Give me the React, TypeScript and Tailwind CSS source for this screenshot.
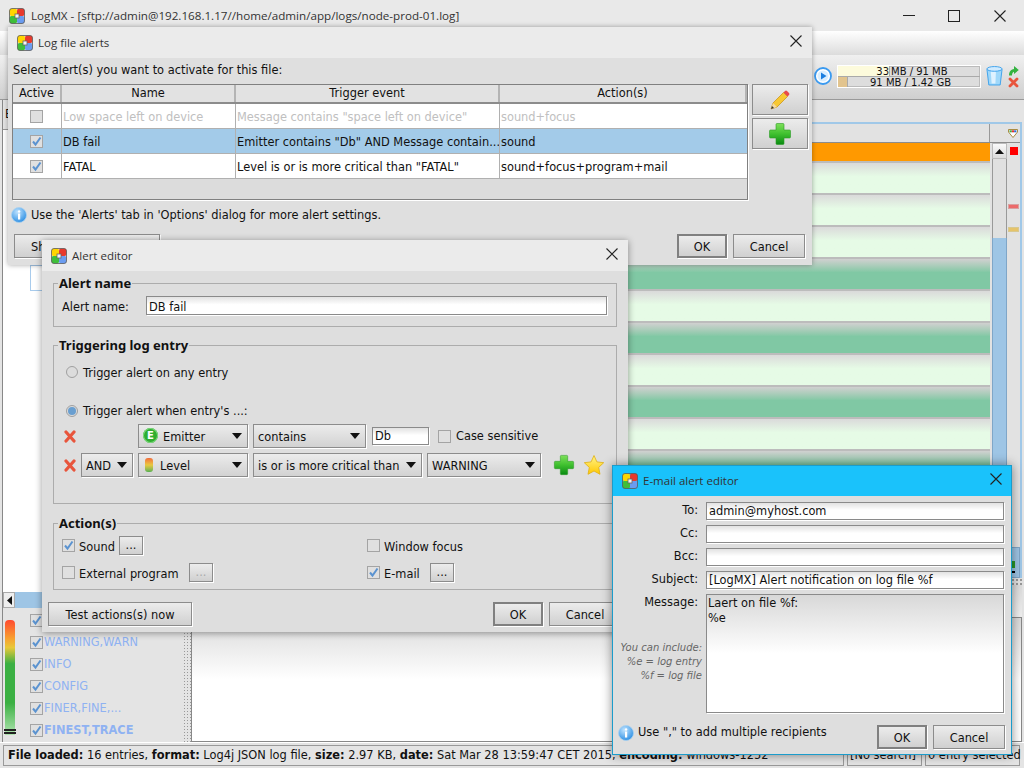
import React from "react"

const Logo = () => (
  <svg width="16" height="16" viewBox="0 0 16 16" className="shrink-0">
    <rect x="0.5" y="0.5" width="7.5" height="7.5" rx="2" fill="#ffd500" />
    <rect x="8" y="0.5" width="7.5" height="7.5" rx="2" fill="#e8392c" />
    <rect x="0.5" y="8" width="7.5" height="7.5" rx="2" fill="#3fbf3a" />
    <rect x="8" y="8" width="7.5" height="7.5" rx="2" fill="#6b9cf0" />
    <rect x="0.5" y="0.5" width="15" height="15" rx="2.5" fill="none" stroke="#5a5a5a" strokeWidth="0.8" />
    <rect x="6" y="6" width="4" height="4" fill="#f4f4f4" stroke="#666" strokeWidth="0.8" />
  </svg>
)

const CloseX = ({ size = 12 }: { size?: number }) => (
  <svg width={size} height={size} viewBox="0 0 12 12" className="shrink-0">
    <path d="M0.5 0.5L11.5 11.5M11.5 0.5L0.5 11.5" stroke="#222" strokeWidth="1.1" fill="none" />
  </svg>
)

const RedX = () => (
  <svg width="12" height="13" viewBox="0 0 12 13" className="shrink-0">
    <path d="M2 2L10 11M10 2L2 11" stroke="#e8553c" strokeWidth="3.2" strokeLinecap="round" fill="none" />
  </svg>
)

const Plus = ({ size = 24 }: { size?: number }) => (
  <svg width={size} height={size} viewBox="0 0 24 24" className="shrink-0">
    <defs>
      <linearGradient id="plusg" x1="0" y1="0" x2="0" y2="1">
        <stop offset="0" stopColor="#7ee05a" />
        <stop offset="0.5" stopColor="#3fc02f" />
        <stop offset="1" stopColor="#0a8a12" />
      </linearGradient>
    </defs>
    <path d="M9 1.5h6a1 1 0 0 1 1 1V8h5.500a1 1 0 0 1 1 1v6a1 1 0 0 1-1 1H16v5.500a1 1 0 0 1-1 1H9a1 1 0 0 1-1-1V16H2.500a1 1 0 0 1-1-1V9a1 1 0 0 1 1-1H8V2.500a1 1 0 0 1 1-1z" fill="url(#plusg)" stroke="#2c9a26" strokeWidth="0.6" />
  </svg>
)

const Star = () => (
  <svg width="22" height="22" viewBox="0 0 22 22" className="shrink-0">
    <defs>
      <linearGradient id="starg" x1="0" y1="0" x2="0" y2="1">
        <stop offset="0" stopColor="#fff48a" />
        <stop offset="1" stopColor="#ffc800" />
      </linearGradient>
    </defs>
    <path d="M11 1.500l2.900 6.400 6.800.8-5 4.700 1.300 6.900L11 17l-6 3.300 1.300-6.900-5-4.700 6.800-.8z" fill="url(#starg)" stroke="#e0b010" strokeWidth="0.8" strokeLinejoin="round" />
  </svg>
)

const Pencil = () => (
  <svg width="20" height="20" viewBox="0 0 20 20">
    <path d="M1 19l2-6L13.500 2.500l4 4L7 17z" fill="#f7c832" stroke="#c98f10" strokeWidth="0.7" />
    <path d="M1 19l2-6 4 4z" fill="#f4d9a0" />
    <path d="M1 19l1-3 2 2z" fill="#333" />
    <path d="M13.500 2.500l1.500-1.500a1.500 1.500 0 0 1 2 0l2 2a1.500 1.500 0 0 1 0 2l-1.500 1.500z" fill="#e84a4a" />
  </svg>
)

const Info = () => (
  <svg width="16" height="16" viewBox="0 0 16 16" className="shrink-0">
    <defs>
      <radialGradient id="infog" cx="0.4" cy="0.3" r="0.8">
        <stop offset="0" stopColor="#bfe3ff" />
        <stop offset="1" stopColor="#1d86e0" />
      </radialGradient>
    </defs>
    <circle cx="8" cy="8" r="7.5" fill="url(#infog)" stroke="#a8d0f0" strokeWidth="0.8" />
    <rect x="7" y="6.500" width="2.200" height="6" fill="#fff" />
    <circle cx="8.100" cy="4.500" r="1.200" fill="#fff" />
  </svg>
)

const Check = ({ checked, faded }: { checked?: boolean; faded?: boolean }) => (
  <span className={`flex h-[13px] w-[13px] shrink-0 items-center justify-center border border-[#a4a4a4] ${faded ? "bg-[#e4e4e4]" : "bg-[#e0e0e0]"}`}>
    {checked && (
      <svg width="11" height="11" viewBox="0 0 11 11">
        <path d="M2 5.500L4.500 8.500L9.500 1.500" stroke="#5b93d0" strokeWidth="2" fill="none" />
      </svg>
    )}
  </span>
)

const Radio = ({ on }: { on?: boolean }) => (
  <span className="flex h-[12px] w-[12px] shrink-0 items-center justify-center rounded-full border border-[#a0a0a0] bg-[#dcdcdc]">
    {on && <span className="h-[8px] w-[8px] rounded-full bg-[#6a9fd0]" />}
  </span>
)

function Btn({ children, w, main, faded, h = "h-[24px]" }: { children: React.ReactNode; w: string; main?: boolean; faded?: boolean; h?: string }) {
  return (
    <div className={`flex ${h} ${w} shrink-0 items-center justify-center bg-gradient-to-b from-[#ececec] to-[#d0d0d0] shadow-[1px_1px_0_#fff] ${main ? "border-2 border-[#808080]" : "border border-[#8c8c8c]"} ${faded ? "text-[#aaa]" : "text-[#111]"}`}>
      {children}
    </div>
  )
}

const inputCls = "flex items-center border border-[#8a8a8a] bg-gradient-to-b from-[#e2e2e2] to-white to-[45%] pl-[2px] pt-[2px] whitespace-nowrap shadow-[1px_1px_0_#fff]"

function Select({ w, icon, label, h = "h-[24px]" }: { w: string; icon?: React.ReactNode; label: string; h?: string }) {
  return (
    <div className={`flex ${h} ${w} shrink-0 items-center justify-between border border-[#8c8c8c] bg-gradient-to-b from-[#ececec] to-[#d2d2d2] pl-[4px] pr-[5px] shadow-[1px_1px_0_#fff]`}>
      <span className="flex items-center gap-[5px] whitespace-nowrap">
        {icon}
        <span className="pt-[4px]">{label}</span>
      </span>
      <svg width="10" height="6" viewBox="0 0 10 6" className="shrink-0">
        <path d="M0 0H10L5 6z" fill="#111" />
      </svg>
    </div>
  )
}

function TitleBar({ title, h = "h-[31px]", bg = "bg-[#ebebeb]", closeCls }: { title: string; h?: string; bg?: string; closeCls: string }) {
  return (
    <div className={`flex ${h} shrink-0 items-center pl-[9px] ${bg} font-['Open_Sans','Noto_Sans',sans-serif] text-[11.5px] text-[#333]`}>
      <Logo />
      <span className="ml-[5px] flex-1">{title}</span>
      <span className={closeCls}>
        <CloseX />
      </span>
    </div>
  )
}

function Legend({ children }: { children: React.ReactNode }) {
  return <legend className="-ml-[4px] px-[1px] font-['Noto_Sans',sans-serif] text-[13px] leading-[16px] font-bold text-[#111]">{children}</legend>
}

const alertRows = [
  { name: "Low space left on device", trig: 'Message contains "space left on device"', act: "sound+focus", faded: true, checked: false },
  { name: "DB fail", trig: 'Emitter contains "Db" AND Message contain...', act: "sound", sel: true, checked: true },
  { name: "FATAL", trig: 'Level is or is more critical than "FATAL"', act: "sound+focus+program+mail", checked: true },
]

const tableCols = "grid grid-cols-[49px_174px_264px_247px]"

function AlertsDialog() {
  return (
    <div className="absolute left-[8px] top-[27px] flex h-[238px] w-[804px] flex-col bg-[#dfdfdf] shadow-[0_0_5px_rgba(0,0,0,0.35)]">
      <TitleBar title="Log file alerts" closeCls="mr-[10px] mb-[3px]" />
      <div className="flex flex-1 flex-col px-[4px]">
        <div className="flex h-[26px] shrink-0 items-center pl-[1px]">Select alert(s) you want to activate for this file:</div>
        <div className="flex gap-[4px]">
          <div className="h-[116px] w-[736px] border border-[#808080] bg-[#dcdcdc] shadow-[1px_1px_0_#fff]">
            <div className={`${tableCols} h-[19px] border-b-2 border-[#8c8c8c]`}>
              {["Active", "Name", "Trigger event", "Action(s)"].map((c) => (
                <div key={c} className="flex items-center justify-center border-r-2 border-[#b4b4b4] bg-[#e2e2e2] leading-none">
                  {c}
                </div>
              ))}
            </div>
            {alertRows.map((r) => (
              <div key={r.name} className={`${tableCols} h-[25px] border-b border-[#b0b0b0] ${r.sel ? "bg-[#a3cbe9]" : "bg-white"} ${r.faded ? "text-[#c0c0c0]" : "text-[#111]"}`}>
                <div className="flex items-center justify-center border-r border-[#b0b0b0] pr-[2px]">
                  <Check checked={r.checked} />
                </div>
                <div className="flex items-center border-r border-[#b0b0b0] pl-[1px] pt-[4px] whitespace-nowrap">{r.name}</div>
                <div className="flex items-center overflow-hidden border-r border-[#b0b0b0] pl-[1px] pt-[4px] whitespace-nowrap">{r.trig}</div>
                <div className="flex items-center pl-[1px] pt-[4px] whitespace-nowrap">{r.act}</div>
              </div>
            ))}
          </div>
          <div className="flex flex-col gap-[3px]">
            <Btn w="w-[56px]" h="h-[31px]">
              <Pencil />
            </Btn>
            <Btn w="w-[56px]" h="h-[31px]">
              <Plus />
            </Btn>
          </div>
        </div>
        <div className="mt-[6px] -ml-[1px] flex h-[18px] items-center gap-[4px]">
          <Info />
          <span className="pt-[1px]">Use the 'Alerts' tab in 'Options' dialog for more alert settings.</span>
        </div>
        <div className="mt-[10px] flex items-start justify-between pl-[2px] pr-[3px]">
          <Btn w="w-[146px]">
            <span className="w-full pl-[16px] pt-[4px]">Sh</span>
          </Btn>
          <div className="flex gap-[6px]">
            <Btn w="w-[50px]" main><span className="pt-[4px]">OK</span></Btn>
            <Btn w="w-[72px]"><span className="pt-[4px]">Cancel</span></Btn>
          </div>
        </div>
      </div>
    </div>
  )
}

const EmitterIcon = () => (
  <span className="flex h-[15px] w-[15px] shrink-0 items-center justify-center rounded-full bg-[#2fae2f] text-[10px] leading-none font-bold text-white shadow-[inset_0_0_0_1px_#7ed87e]">E</span>
)

const LevelIcon = () => (
  <span className="mx-[2px] h-[14px] w-[8px] shrink-0 rounded-[3px] bg-gradient-to-b from-[#f06a3c] via-[#e8c840] to-[#52b052]" />
)

function AlertEditor() {
  return (
    <div className="absolute left-[42px] top-[240px] flex h-[392px] w-[586px] flex-col bg-[#dedede] shadow-[0_1px_7px_rgba(0,0,0,0.4)]">
      <TitleBar title="Alert editor" closeCls="mr-[10px] mb-[4px]" />
      <div className="flex flex-1 flex-col px-[11px] pt-[4px]">
        <fieldset className="h-[52px] border border-[#acacac] px-[8px]">
          <Legend>Alert name</Legend>
          <div className="flex items-center pt-[4px]">
            <span className="w-[84px] shrink-0 pt-[4px] whitespace-nowrap">Alert name:</span>
            <div className={`${inputCls} h-[19px] w-[461px] pt-[4px]`}>DB fail</div>
          </div>
        </fieldset>
        <fieldset className="mt-[10px] h-[167px] border border-[#acacac] px-[8px]">
          <Legend>Triggering log entry</Legend>
          <div className="mt-[9px] flex h-[20px] items-center gap-[5px] pl-[4px]">
            <Radio />
            <span className="pt-[4px]">Trigger alert on any entry</span>
          </div>
          <div className="mt-[19px] flex h-[20px] items-center gap-[5px] pl-[4px]">
            <Radio on />
            <span className="pt-[2px]">Trigger alert when entry's ...:</span>
          </div>
          <div className="mt-[3px] flex h-[24px] items-center">
            <span className="w-[19px] pl-[2px]">
              <RedX />
            </span>
            <span className="w-[57px]" />
            <Select w="w-[110px]" icon={<EmitterIcon />} label="Emitter" />
            <div className="w-[5px]" />
            <Select w="w-[113px]" label="contains" />
            <div className={`${inputCls} ml-[6px] h-[18px] w-[57px]`}>Db</div>
            <div className="ml-[9px]">
              <Check />
            </div>
            <span className="ml-[5px] pt-[2px] whitespace-nowrap">Case sensitive</span>
          </div>
          <div className="mt-[5px] flex h-[24px] items-center">
            <span className="w-[19px] pl-[2px]">
              <RedX />
            </span>
            <Select w="w-[52px]" label="AND" />
            <div className="w-[5px]" />
            <Select w="w-[110px]" icon={<LevelIcon />} label="Level" />
            <div className="w-[5px]" />
            <Select w="w-[169px]" label="is or is more critical than" />
            <div className="w-[5px]" />
            <Select w="w-[114px]" label="WARNING" />
            <div className="ml-[12px]">
              <Plus size={22} />
            </div>
            <div className="ml-[8px]">
              <Star />
            </div>
          </div>
        </fieldset>
        <fieldset className="mt-[11px] h-[75px] border border-[#acacac] px-[8px]">
          <Legend>Action(s)</Legend>
          <div className="mt-[5px] flex h-[19px] items-center">
            <div className="flex w-[305px] items-center">
              <Check checked />
              <span className="ml-[4px] w-[34px] pt-[4px] whitespace-nowrap">Sound</span>
              <div className="ml-[6px]">
                <Btn w="w-[24px]" h="h-[19px]">...</Btn>
              </div>
            </div>
            <Check />
            <span className="ml-[4px] pt-[4px] whitespace-nowrap">Window focus</span>
          </div>
          <div className="mt-[8px] flex h-[19px] items-center">
            <div className="flex w-[305px] items-center">
              <Check />
              <span className="ml-[4px] w-[100px] pt-[4px] whitespace-nowrap">External program</span>
              <div className="ml-[10px]">
                <Btn w="w-[24px]" h="h-[19px]" faded>...</Btn>
              </div>
            </div>
            <Check checked />
            <span className="ml-[4px] w-[36px] pt-[4px] whitespace-nowrap">E-mail</span>
            <div className="ml-[10px]">
              <Btn w="w-[24px]" h="h-[19px]">...</Btn>
            </div>
          </div>
        </fieldset>
        <div className="mt-[12px] -mr-[4px] -ml-[5px] flex justify-between">
          <Btn w="w-[144px]"><span className="pt-[4px]">Test actions(s) now</span></Btn>
          <div className="flex gap-[6px]">
            <Btn w="w-[50px]" main><span className="pt-[4px]">OK</span></Btn>
            <Btn w="w-[72px]"><span className="pt-[4px]">Cancel</span></Btn>
          </div>
        </div>
      </div>
    </div>
  )
}

function MailRow({ label, value }: { label: string; value?: string }) {
  return (
    <div className="flex h-[18px] gap-[3px]">
      <span className="w-[90px] shrink-0 pr-[5px] text-right leading-[16px]">{label}</span>
      <div className={`${inputCls} h-[18px] w-[298px] pl-[1px]`}>{value}</div>
    </div>
  )
}

function MailDialog() {
  return (
    <div className="absolute left-[612px] top-[465px] flex h-[290px] w-[400px] flex-col border border-[#1b9ccb] bg-[#dedede] shadow-[0_0_10px_rgba(0,0,0,0.45)]">
      <TitleBar title="E-mail alert editor" h="h-[30px]" bg="bg-[#1ac2fb]" closeCls="mr-[9px] mb-[5px]" />
      <div className="flex flex-1 flex-col gap-[5px] pt-[6px]">
        <MailRow label="To:" value="admin@myhost.com" />
        <MailRow label="Cc:" />
        <MailRow label="Bcc:" />
        <MailRow label="Subject:" value="[LogMX] Alert notification on log file %f" />
        <div className="flex h-[119px] gap-[3px]">
          <div className="w-[90px] shrink-0 text-right">
            <div className="pr-[5px] leading-[17px]">Message:</div>
            <div className="mt-[30px] pr-[1px] text-[10px] leading-[14px] whitespace-nowrap text-[#666] italic">
              You can include:
              <br />
              %e = log entry
              <br />
              %f = log file
            </div>
          </div>
          <div className="h-[119px] w-[298px] border border-[#8a8a8a] bg-gradient-to-b from-[#d8d8d8] to-white to-[50%] pl-[1px] pt-[1px] leading-[15px] shadow-[1px_1px_0_#fff]">
            Laert on file %f:
            <br />
            %e
          </div>
        </div>
        <div className="mt-[7px] flex h-[24px] items-center pl-[5px] pr-[6px]">
          <div className="flex flex-1 items-center gap-[4px] pb-[8px]">
            <Info />
            <span>Use "," to add multiple recipients</span>
          </div>
          <div className="flex gap-[6px]">
            <Btn w="w-[50px]" main><span className="pt-[4px]">OK</span></Btn>
            <Btn w="w-[72px]"><span className="pt-[4px]">Cancel</span></Btn>
          </div>
        </div>
      </div>
    </div>
  )
}

// first row's label sits under the alert editor in the screenshot
const levels = ["", "WARNING,WARN", "INFO", "CONFIG", "FINER,FINE,...", "FINEST,TRACE"]

function LevelPane() {
  return (
    <div className="flex h-[134px] shrink-0">
      <div className="relative flex w-[180px] pl-[2px]">
        <div className="mt-[12px] h-[115px] w-[10px] rounded-t-[4px] bg-[linear-gradient(#ff4a30,#f8a030_16%,#e8c838_24%,#3bb043_38%,#3bb043_72%,#b0e4b0)]" />
        <div className="ml-[15px] flex flex-col pt-[1px]">
          {levels.map((l, i) => (
            <div key={i} className={`flex h-[22px] shrink-0 items-center gap-[1px] whitespace-nowrap text-[#8fb2f2] ${i === 5 ? "font-bold" : ""}`}>
              <Check checked />
              <span className="pt-[2px]">{l}</span>
            </div>
          ))}
        </div>
        {/* level slider handle */}
        <div className="absolute left-[1px] top-[121px] h-[5px] w-[12px] border-y-2 border-[#222]" />
      </div>
      <div className="w-[8px] bg-[radial-gradient(#999_1px,transparent_1px)] [background-size:3px_3px]" />
    </div>
  )
}

const logRows = Array.from({ length: 14 }, (_, i) => i)

function LogTable() {
  return (
    <div className="flex h-[456px] shrink-0 flex-col border-t-2 border-r-2 border-[#a0c8e8] bg-[#e2e2e2]">
      <div className="flex h-[19px] shrink-0 border-b border-[#8c8c8c]">
        <div className="flex-1 border-r border-[#999]" />
        <div className="flex w-[30px] items-center justify-end pr-[2px]">
          <svg width="10" height="9" viewBox="0 0 10 9">
            <path d="M0.500 0.500H9.500V3L5 8.500L0.500 3z" fill="#fff" stroke="#a08030" strokeWidth="0.9" />
            <rect x="1.500" y="1.300" width="2.300" height="2" fill="#36b040" />
            <rect x="3.800" y="1.300" width="2.300" height="2" fill="#e03030" />
            <rect x="6.100" y="1.300" width="2.300" height="2" fill="#3070d0" />
          </svg>
        </div>
      </div>
      <div className="flex min-h-0 flex-1">
        <div className="flex flex-1 flex-col overflow-hidden">
          <div className="h-[18px] shrink-0 bg-[#ff9900]" />
          <div className="h-[2px] shrink-0 bg-[#bcbcbc]" />
          {logRows.map((i) => (
            <div key={i} className={`h-[32px] shrink-0 border-b-2 border-[#bcbcbc] bg-gradient-to-b ${i > 2 && i % 2 === 1 ? "from-[#d0d0d0] to-[#80c8a4] to-[45%]" : "from-[#dadada] to-[#e6fbe6] to-[45%]"}`} />
          ))}
        </div>
        <div className="ml-[2px] flex w-[15px] flex-col">
          <div className="flex h-[16px] shrink-0 items-center justify-center border border-[#bbb] bg-gradient-to-b from-[#fafafa] to-[#dcdcdc]">
            <svg width="9" height="5" viewBox="0 0 9 5">
              <path d="M0 5H9L4.500 0z" fill="#111" />
            </svg>
          </div>
          <div className="h-[79px] shrink-0 border-x border-[#999] bg-[#e0e0e0]" />
          <div className="flex-1 border-x border-[#7fa6c8] bg-[#9ec5e5]" />
        </div>
        <div className="flex w-[13px] flex-col items-center pt-[4px]">
          <div className="h-[8px] w-[8px] bg-[#ff0000]" />
          <div className="mt-[49px] h-[5px] w-[11px] border border-[#d8a0a0] bg-[#ec6a6a]" />
          <div className="mt-[18px] h-[5px] w-[11px] border border-[#d8c890] bg-[#e6c46a]" />
          <div className="flex-1" />
          <div className="h-[31px] w-full border border-[#7fa6c8] bg-[#9ec5e5] pl-[4px] pt-[13px]">
            <div className="h-[7px] w-[3px] bg-[#2a9a2a]" />
            <div className="mt-[3px] h-[2px] w-[3px] bg-black" />
          </div>
        </div>
      </div>
    </div>
  )
}

export default function App() {
  return (
    <div className="relative flex h-[768px] w-[1024px] flex-col overflow-hidden bg-[#e4e4e4] font-['DejaVu_Sans','Noto_Sans',sans-serif] text-[11.4px] text-[#111]">
      {/* main window */}
      <div className="flex h-[31px] shrink-0 items-center bg-[#e9e9e9] pl-[9px] font-['Open_Sans','Noto_Sans',sans-serif] text-[11.65px] text-[#333]">
        <Logo />
        <span className="ml-[6px] flex-1">LogMX - [sftp://admin@192.168.1.17//home/admin/app/logs/node-prod-01.log]</span>
        <div className="h-px w-[12px] bg-[#222]" />
        <div className="ml-[33px] h-[12px] w-[12px] border border-[#222]" />
        <div className="ml-[34px] mr-[18px]">
          <CloseX />
        </div>
      </div>
      <div className="h-[24px] shrink-0 bg-gradient-to-b from-white to-[#dcdcdc]" />
      <div className="flex h-[45px] shrink-0 items-center border-b border-[#999] bg-gradient-to-b from-[#f0f0f0] to-[#cfcfcf] pb-[2px]">
        <div className="flex-1" />
        <svg width="18" height="18" viewBox="0 0 18 18" className="shrink-0">
          <circle cx="9" cy="9" r="8" fill="#fff" stroke="#3a9af0" strokeWidth="1.800" />
          <circle cx="9" cy="9" r="5.500" fill="#d8eeff" />
          <path d="M7 5.500L12.500 9L7 12.500z" fill="#1a7ee0" />
        </svg>
        <div className="ml-[5px] flex h-[23px] w-[144px] flex-col border border-[#fff] bg-[#ddd] text-[10px] leading-[11px] shadow-[inset_0_0_0_1px_#bbb]">
          <div className="flex h-[11px] shrink-0 border-b border-[#aaa]">
            <span className="w-[51px] bg-[#fdfbdc] text-right">33</span>
            <span className="border-l border-[#aaa] pl-[1px] whitespace-nowrap">MB / 91 MB</span>
          </div>
          <div className="flex h-[10px] shrink-0">
            <span className="w-[9px] bg-[#e2c48e]" />
            <span className="flex-1 border-l border-[#aaa] pl-[22px] whitespace-nowrap">91 MB / 1.42 GB</span>
          </div>
        </div>
        <svg width="17" height="22" viewBox="0 0 18 22" className="ml-[5px] shrink-0">
          <path d="M1 4L3 20.500H15L17 4z" fill="#9fd8fa" stroke="#3aa0ec" strokeWidth="1" />
          <path d="M5 6L6 19H10L10.500 6z" fill="#dff2ff" />
          <ellipse cx="9" cy="3.500" rx="8" ry="2.500" fill="#d0ebff" stroke="#3aa0ec" strokeWidth="1" />
        </svg>
        <div className="ml-[5px] mr-[6px] flex w-[10px] flex-col items-center gap-[1px]">
          <svg width="11" height="11" viewBox="0 0 11 11" className="shrink-0">
            <path d="M1 10.500C1 6 3.500 4.500 6 4V1L10.800 5L6 9V6.800C4.800 7 4 8.500 4 10.500z" fill="#33b340" />
          </svg>
          <svg width="11" height="11" viewBox="0 0 11 11" className="shrink-0">
            <path d="M2 2L9 9M9 2L2 9" stroke="#e8553c" strokeWidth="2.800" strokeLinecap="round" />
          </svg>
        </div>
      </div>
      {/* left panes + log view */}
      <div className="flex min-h-0 flex-1 pl-[2px]">
        <div className="flex w-[189px] shrink-0 flex-col border-l border-[#888]">
          <div className="flex h-[30px] w-[24px] shrink-0 items-center border-r border-b border-[#999] pl-[2px]">E</div>
          <div className="flex-1 bg-white pl-[27px] pt-[135px]">
            <div className="h-[26px] w-[20px] border-y border-l border-[#a8cbec]" />
          </div>
          <div className="flex h-[16px] shrink-0 bg-[#d8d8d8]">
            <div className="flex w-[12px] items-center justify-center border border-[#aaa] bg-[#eee]">
              <svg width="5" height="9" viewBox="0 0 5 9">
                <path d="M5 0V9L0 4.500z" fill="#111" />
              </svg>
            </div>
            <div className="w-[60px] bg-[#9ec5e5]" />
          </div>
          <LevelPane />
        </div>
        <div className="flex flex-1 flex-col pr-[2px]">
          <div className="h-[22px] shrink-0" />
          <LogTable />
          <div className="h-[7px] shrink-0 bg-[radial-gradient(#999_1px,transparent_1px)] [background-size:4px_4px]" />
          <div className="h-[32px] shrink-0 bg-gradient-to-b from-[#dcdcdc] to-[#f0f0f0]" />
          <div className="h-[125px] shrink-0 border border-[#888] bg-gradient-to-b from-[#dadada] to-white to-[50%]" />
        </div>
      </div>
      {/* status bar */}
      <div className="flex h-[26px] shrink-0 items-center gap-[3px] border-t border-white pl-[3px] pr-[4px] leading-none">
        <div className="flex h-[21px] flex-1 items-center border border-[#999] pl-[4px] whitespace-nowrap">
          <b>File loaded:</b>&nbsp;16 entries,&nbsp;<b>format:</b>&nbsp;Log4j JSON log file,&nbsp;<b>size:</b>&nbsp;2.97 KB,&nbsp;<b>date:</b>&nbsp;Sat Mar 28 13:59:47 CET 2015,&nbsp;<b>encoding:</b>&nbsp;windows-1252
        </div>
        <div className="flex h-[21px] w-[75px] items-center border border-[#999] pl-[2px] whitespace-nowrap">[No search]</div>
        <div className="flex h-[21px] w-[95px] items-center border border-[#999] pl-[2px] whitespace-nowrap">0 entry selected</div>
      </div>
      <AlertsDialog />
      <AlertEditor />
      <MailDialog />
    </div>
  )
}
